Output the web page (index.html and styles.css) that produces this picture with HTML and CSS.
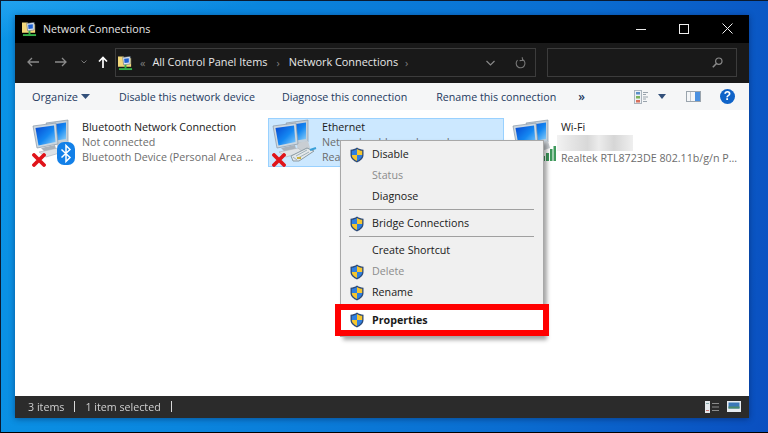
FILE: index.html
```html
<!DOCTYPE html>
<html lang="en">
<head>
    <meta charset="UTF-8">
    <meta name="viewport" content="width=device-width, initial-scale=1.0">
    <title>Network Connections</title>
    <link rel="stylesheet" href="styles.css">
</head>
<body>
    <svg class="defs" width="0" height="0">
        <defs>
            <linearGradient id="screen" x1="0" y1="0" x2="1" y2="1">
                <stop offset="0" stop-color="#0646d0"/>
                <stop offset="0.55" stop-color="#1488f2"/>
                <stop offset="1" stop-color="#8fd0f8"/>
            </linearGradient>
            <symbol id="computers" viewBox="0 0 48 48">
                <path d="M14 4 36 1 36 23 22 25Z" fill="#c4d0da" stroke="#8a98a6" stroke-width=".7"/>
                <path d="M17 6 34 3.500 34 20 21 22Z" fill="url(#screen)"/>
                <path d="M24 24 36 22 38 29 27 33Z" fill="#c9ced3"/>
                <path d="M1 7 24 4 26 25 5 29Z" fill="#ccd7e0" stroke="#8a98a6" stroke-width=".7"/>
                <path d="M3.500 9 22 6.500 23.500 23 6.500 26.500Z" fill="url(#screen)"/>
                <path d="M9 29 23 26 24 30 13 33Z" fill="#aab2ba"/>
                <path d="M7 33 26 29 31 33 14 38Z" fill="#dfe3e6" stroke="#a8b0b8" stroke-width=".6"/>
            </symbol>
            <symbol id="redx" viewBox="0 0 14 14">
                <path d="M2 2 12 12M12 2 2 12" stroke="#e0141a" stroke-width="3.800" stroke-linecap="round"/>
            </symbol>
            <symbol id="shield" viewBox="0 0 16 16">
                <path d="M8 .6C6 2 4 2.600 1.500 2.700V8c0 3.500 3 6 6.500 7.400 3.500-1.400 6.500-3.900 6.500-7.400V2.700C12 2.600 10 2 8 .6Z" fill="#2d4a78"/>
                <path d="M8 2 8 8H2.800V3.800C4.600 3.700 6.400 3.100 8 2Z" fill="#2f7fe0"/>
                <path d="M8 2C9.600 3.100 11.400 3.700 13.200 3.800V8H8Z" fill="#f6c62e"/>
                <path d="M2.800 8H8V14C5.200 12.800 2.800 10.800 2.800 8Z" fill="#f6c62e"/>
                <path d="M8 8H13.200C13.200 10.800 10.800 12.800 8 14Z" fill="#2f7fe0"/>
            </symbol>
            <symbol id="netfolder" viewBox="0 0 16 16">
                <path d="M0 1H6L7 3H14V12H0Z" fill="#f2d77a"/>
                <path d="M5 2 13 1V9L6 10Z" fill="#dfe6ee" stroke="#5a6a80" stroke-width=".6"/>
                <path d="M6.500 3.500 11.500 3V7.500L7 8Z" fill="#1c5fd0"/>
                <rect x="1" y="13.500" width="14" height="2" fill="#36b24a"/>
                <rect x="7" y="10" width="2" height="4" fill="#36b24a"/>
            </symbol>
        </defs>
    </svg>

    <div class="window">
        <div class="titlebar">
            <svg class="title-icon"><use href="#netfolder"/></svg>
            <span class="title-text">Network Connections</span>
            <div class="win-controls">
                <svg width="10" height="10" viewBox="0 0 10 10"><path d="M0 5.500H10" stroke="#e8e8e8"/></svg>
                <svg width="10" height="10" viewBox="0 0 10 10"><rect x=".5" y=".5" width="9" height="9" fill="none" stroke="#f0f0f0"/></svg>
                <svg width="11" height="11" viewBox="0 0 11 11"><path d="M.5.500 10.500 10.500M10.500.500 .5 10.500" stroke="#f0f0f0"/></svg>
            </div>
        </div>

        <div class="navbar">
            <div class="nav-buttons">
                <svg width="12" height="10" viewBox="0 0 12 10"><path d="M12 5H1M5 1 1 5 5 9" fill="none" stroke="#8a8a8a" stroke-width="1.300"/></svg>
                <svg width="12" height="10" viewBox="0 0 12 10"><path d="M0 5H11M7 1 11 5 7 9" fill="none" stroke="#8a8a8a" stroke-width="1.300"/></svg>
                <svg class="nav-drop" width="6" height="4" viewBox="0 0 6 4"><path d="M.5.500 3 3 5.500.500" fill="none" stroke="#777"/></svg>
                <svg class="nav-up" width="10" height="12" viewBox="0 0 10 12"><path d="M5 12V1.500M1 5.500 5 1.500 9 5.500" fill="none" stroke="#fff" stroke-width="1.700"/></svg>
            </div>
            <div class="address">
                <svg class="addr-icon"><use href="#netfolder"/></svg>
                <span class="crumb-sep">«</span>
                <span class="crumb">All Control Panel Items</span>
                <span class="crumb-sep crumb-mid">›</span>
                <span class="crumb">Network Connections</span>
                <span class="crumb-sep">›</span>
                <svg class="addr-drop" width="9" height="6" viewBox="0 0 9 6"><path d="M.5 1 4.500 5 8.500 1" fill="none" stroke="#888" stroke-width="1.200"/></svg>
                <svg class="addr-refresh" width="11" height="12" viewBox="0 0 11 12"><path d="M3 2.800A4.400 4.400 0 1 0 8 2.800M8 .5V3.500H5" fill="none" stroke="#777" stroke-width="1.100" transform="rotate(-8 5.500 6)"/></svg>
            </div>
            <div class="search">
                <svg width="11" height="11" viewBox="0 0 11 11"><circle cx="6.800" cy="4.200" r="3.200" fill="none" stroke="#8a8a8a" stroke-width="1.200"/><path d="M4.500 6.500 .8 10.200" stroke="#8a8a8a" stroke-width="1.600"/></svg>
            </div>
        </div>

        <div class="toolbar">
            <span class="tool tool-organize">Organize</span>
            <svg class="caret" width="9" height="5" viewBox="0 0 9 5"><path d="M0 0H9L4.500 5Z" fill="#33507a"/></svg>
            <span class="tool tool-disable">Disable this network device</span>
            <span class="tool tool-diagnose">Diagnose this connection</span>
            <span class="tool tool-rename">Rename this connection</span>
            <span class="tool-more">»</span>
            <div class="tool-right">
                <svg width="14" height="14" viewBox="0 0 14 14"><rect x=".5" y=".5" width="7" height="13" fill="#eef1f4" stroke="#aab4bd"/><rect x="2" y="2" width="4" height="2.500" fill="#5a8fc8"/><rect x="2" y="6" width="4" height="2.500" fill="#7ab35c"/><rect x="2" y="10" width="4" height="2.500" fill="#d8705c"/><path d="M9 2.500H14M9 4.500H12M9 7H14M9 9H12M9 11.500H13" stroke="#9aa4ad"/></svg>
                <svg class="caret view-caret" width="8" height="5" viewBox="0 0 8 5"><path d="M0 0H8L4 5Z" fill="#33507a"/></svg>
                <svg class="pane-icon" width="15" height="11" viewBox="0 0 15 11"><rect x=".5" y=".5" width="14" height="10" fill="#f4f6f8" stroke="#9aa4ad"/><rect x="9" y="1" width="5" height="9" fill="#4a90e0"/><path d="M4.500 1V10" stroke="#c0c8d0"/></svg>
                <div class="help">?</div>
            </div>
        </div>

        <div class="content">
            <div class="net-item">
                <div class="net-icon">
                    <svg class="computers"><use href="#computers"/></svg>
                    <svg class="badge-x"><use href="#redx"/></svg>
                    <svg class="badge-bt" viewBox="0 0 18 23"><rect width="18" height="23" rx="7" fill="#1380e8"/><path d="M4.500 7.500 13 15.500 9 19.500V3.500L13 7.500 4.500 15.500" fill="none" stroke="#fff" stroke-width="1.500"/></svg>
                </div>
                <div class="net-text">
                    <div class="net-name">Bluetooth Network Connection</div>
                    <div>Not connected</div>
                    <div>Bluetooth Device (Personal Area ...</div>
                </div>
            </div>
            <div class="net-item selected">
                <div class="net-icon">
                    <svg class="computers"><use href="#computers"/></svg>
                    <svg class="badge-x"><use href="#redx"/></svg>
                    <svg class="badge-plug" viewBox="0 0 27 15"><path d="M1 9 17 1 24 4 9 14 3 14Z" fill="#e4e8ea" stroke="#8b9aa2"/><path d="M6 9 17 3M8 11 19 5M3 10 7 13" stroke="#9fb0b8"/><path d="M20 3 26 1" stroke="#3aa0d8" stroke-width="2"/><rect x="7" y="10" width="4" height="2" fill="#c8b040"/></svg>
                </div>
                <div class="net-text">
                    <div class="net-name">Ethernet</div>
                    <div>Network cable unplugged</div>
                    <div>Realtek PCIe GbE Family Contr...</div>
                </div>
            </div>
            <div class="net-item wifi">
                <div class="net-icon">
                    <svg class="computers"><use href="#computers"/></svg>
                    <svg class="badge-wifi" viewBox="0 0 16 16"><path d="M2 11h3v5H2zM6 8h3v8H6zM10 4h2.500v12H10zM13.500 1H16v15h-2.500z" fill="#3f9a5c"/></svg>
                </div>
                <div class="net-text">
                    <div class="net-name">Wi-Fi</div>
                    <div class="blurred-ssid"></div>
                    <div>Realtek RTL8723DE 802.11b/g/n P...</div>
                </div>
            </div>

            <div class="context-menu">
                <div class="menu-row"><svg class="shield"><use href="#shield"/></svg>Disable</div>
                <div class="menu-row disabled">Status</div>
                <div class="menu-row">Diagnose</div>
                <div class="menu-sep"></div>
                <div class="menu-row"><svg class="shield"><use href="#shield"/></svg>Bridge Connections</div>
                <div class="menu-sep"></div>
                <div class="menu-row">Create Shortcut</div>
                <div class="menu-row disabled"><svg class="shield"><use href="#shield"/></svg>Delete</div>
                <div class="menu-row"><svg class="shield"><use href="#shield"/></svg>Rename</div>
                <div class="menu-row menu-properties"><svg class="shield"><use href="#shield"/></svg>Properties</div>
            </div>
        </div>

        <div class="statusbar">
            <span>3 items</span>
            <span class="status-sep"></span>
            <span>1 item selected</span>
            <span class="status-sep"></span>
            <div class="status-right">
                <svg width="14" height="12" viewBox="0 0 14 12"><rect x="0" y="0" width="5" height="12" fill="#e4e8ec"/><path d="M1 2.500H4" stroke="#8aa"/><path d="M1 9.500H4" stroke="#c77"/><path d="M7 2.500H14M7 6H14M7 9.500H14" stroke="#8c8c8c"/></svg>
                <svg width="14" height="11" viewBox="0 0 14 11"><rect width="14" height="11" fill="#e8ecf0"/><rect x="1.500" y="1.500" width="11" height="6" fill="#3a78b8"/><rect x="1.500" y="5.500" width="11" height="2" fill="#4a8a6a"/></svg>
            </div>
        </div>
    </div>
</body>
</html>
```

FILE: styles.css
```css
* {
    box-sizing: border-box;
}

html, body {
    margin: 0;
    height: 100%;
}

body {
    width: 768px;
    height: 433px;
    overflow: hidden;
    padding: 14px 19px 14px 14px;
    border-top: 1px solid #0a1a30;
    border-left: 1px solid #0a1a30;
    border-bottom: 1px solid #000;
    font-family: "Open Sans", "Noto Sans", sans-serif;
    font-size: 10.7px;
    background:
        linear-gradient(172deg, rgba(80, 190, 255, 0.35) 0, rgba(80, 190, 255, 0) 40px),
        linear-gradient(100deg, #0a94e6 0%, #0a86de 30%, #0a6cd0 70%, #0a4fc0 100%);
}

.defs {
    position: absolute;
}

/* the reference is a scaled-up capture, so everything is slightly soft */
.window {
    position: relative;
    display: flex;
    flex-direction: column;
    height: 403px;
    box-shadow: 0 1px 6px rgba(0, 20, 60, 0.45);
    filter: blur(0.3px);
}

/* title bar */
.titlebar {
    display: flex;
    align-items: center;
    height: 28px;
    padding: 0 16px 1px 7px;
    background-color: #000;
    color: #e6e6e6;
}

.title-icon {
    width: 15px;
    height: 16px;
    margin-right: 6px;
}

.win-controls {
    display: flex;
    align-items: center;
    gap: 33px;
    margin-left: auto;
}

/* address row */
.navbar {
    display: flex;
    align-items: flex-start;
    height: 40px;
    padding: 5px 12px 0 12px;
    background-color: #191919;
    color: #e8e8e8;
}

.nav-buttons {
    display: flex;
    align-items: center;
    width: 88px;
    height: 28px;
    gap: 16px;
}

.nav-drop {
    margin-left: -2px;
}

.nav-up {
    margin-left: -5px;
}

.address {
    display: flex;
    align-items: center;
    gap: 7px;
    width: 421px;
    height: 29px;
    padding: 0 0 0 2px;
    border: 1px solid #3c3c3c;
    font-size: 10.9px;
}

.addr-icon {
    width: 15px;
    height: 16px;
}

.crumb {
    margin-bottom: 2px;
}

.crumb-sep {
    color: #808080;
}

.crumb-mid {
    margin: 0 2px;
}

.addr-drop {
    margin-left: auto;
}

.addr-refresh {
    margin: 0 9px 0 13px;
}

.search {
    display: flex;
    align-items: center;
    justify-content: flex-end;
    width: 190px;
    height: 29px;
    margin-left: 11px;
    padding-right: 13px;
    border: 1px solid #3c3c3c;
}

/* command bar */
.toolbar {
    display: flex;
    align-items: center;
    height: 27px;
    padding-left: 17px;
    background-color: #f5f6f7;
    color: #1e3a5f;
}

.tool-organize {
    font-size: 11px;
}

.caret {
    margin-left: 3px;
}

.tool-disable {
    margin-left: 29px;
}

.tool-diagnose {
    margin-left: 27px;
}

.tool-rename {
    margin-left: 29px;
}

.tool-more {
    margin-left: 22px;
    font-size: 12px;
    font-weight: 600;
}

.tool-right {
    display: flex;
    align-items: center;
    margin-left: auto;
    padding-right: 14px;
}

.view-caret {
    margin-left: 10px;
}

.pane-icon {
    margin-left: 20px;
}

.help {
    width: 15px;
    height: 15px;
    margin-left: 19px;
    border-radius: 50%;
    background-color: #0f63c8;
    color: #fff;
    font-family: "Liberation Sans", sans-serif;
    font-size: 12px;
    font-weight: 700;
    line-height: 15px;
    text-align: center;
}

/* connection list */
.content {
    position: relative;
    display: flex;
    flex: 1;
    align-items: flex-start;
    gap: 4px;
    padding: 8px 0 0 13px;
    background-color: #fff;
}

.net-item {
    display: flex;
    gap: 2px;
    width: 236px;
    height: 49px;
    padding: 0 3px;
    border: 1px solid transparent;
    color: #6d6d6d;
    line-height: 15px;
}

.net-item.selected {
    border-color: #99d1ff;
    background-color: #cce8ff;
}

.net-name {
    color: #1a1a1a;
}

.net-text {
    padding-top: 1px;
    white-space: nowrap;
}

.wifi .net-text {
    margin-left: -1px;
}

.net-icon {
    position: relative;
    flex: none;
    width: 48px;
    height: 47px;
}

.computers {
    width: 48px;
    height: 48px;
}

.badge-x {
    position: absolute;
    left: 0;
    top: 34px;
    width: 14px;
    height: 14px;
}

.badge-bt {
    position: absolute;
    left: 25px;
    top: 23px;
    width: 18px;
    height: 23px;
}

.badge-plug {
    position: absolute;
    left: 18px;
    top: 28px;
    width: 27px;
    height: 15px;
}

.badge-wifi {
    position: absolute;
    left: 28px;
    top: 26px;
    width: 16px;
    height: 16px;
}

.blurred-ssid {
    width: 76px;
    height: 16px;
    margin-left: -4px;
    background: linear-gradient(90deg, #f2f2f2 0, #e4e4e4 20%, #d8d8d8 40%, #ececec 55%, #d6d6d6 75%, #efefef 100%);
}

/* context menu */
.context-menu {
    position: absolute;
    left: 325px;
    top: 30px;
    width: 204px;
    height: 197px;
    padding-top: 3px;
    border: 1px solid #a8a8a8;
    background-color: #f0f0f0;
    box-shadow: 3px 3px 4px rgba(0, 0, 0, 0.35);
    color: #1a1a1a;
}

.menu-row {
    position: relative;
    height: 21px;
    padding-left: 31px;
    line-height: 21px;
}

.menu-row.disabled {
    color: #8c8c8c;
}

.shield {
    position: absolute;
    left: 8px;
    top: 3px;
    width: 16px;
    height: 16px;
}

.menu-sep {
    height: 1px;
    margin: 2px 9px 3px 8px;
    background-color: #a0a0a0;
}

.menu-properties {
    height: 32px;
    margin: 1px -6px 0;
    padding-left: 31px;
    border: 6px solid #f00;
    background-color: #fff;
    font-weight: 700;
    line-height: 20px;
}

.menu-properties .shield {
    left: 8px;
    top: 2px;
}

/* status bar */
.statusbar {
    display: flex;
    align-items: center;
    gap: 10px;
    height: 22px;
    padding: 0 0 1px 13px;
    background-color: #2b2b2b;
    color: #cfcfcf;
}

.status-sep {
    width: 1px;
    height: 11px;
    background-color: #d8d8d8;
}

.status-right {
    display: flex;
    align-items: center;
    gap: 8px;
    margin-left: auto;
    padding-right: 8px;
}
```
